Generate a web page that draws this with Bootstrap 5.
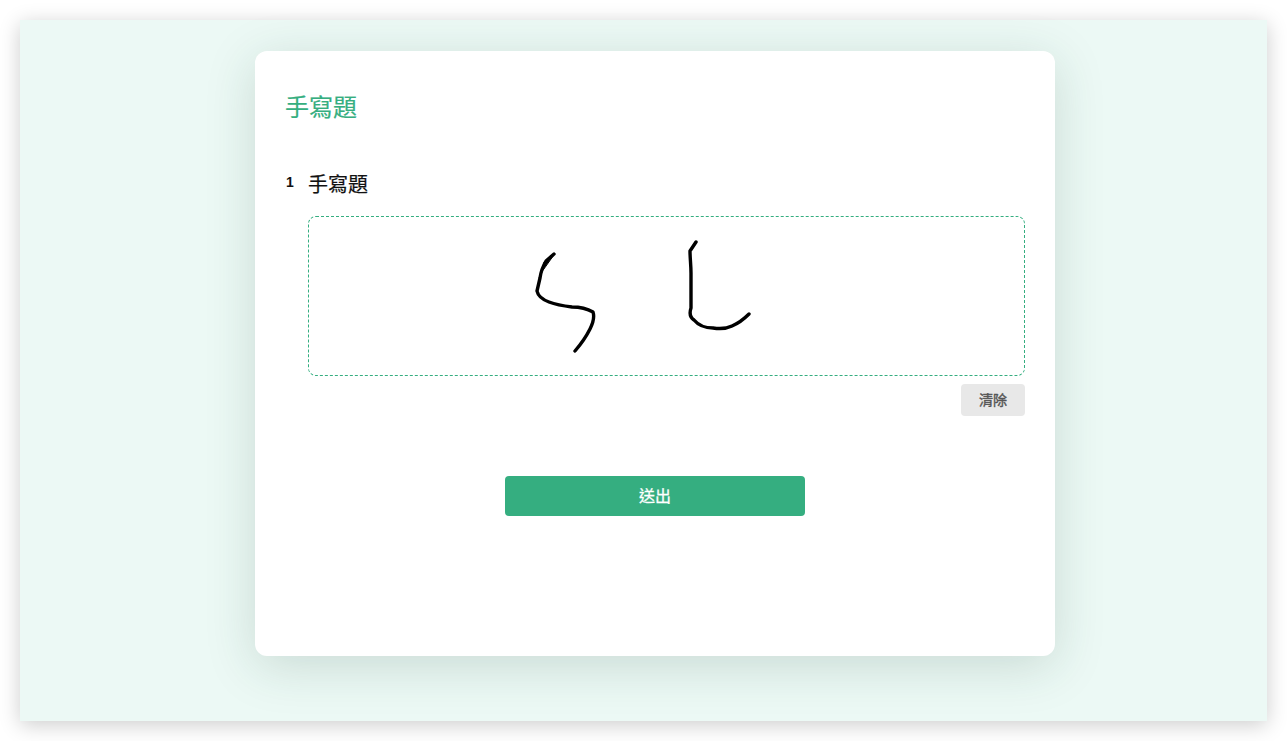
<!DOCTYPE html>
<html lang="zh-Hant">
<head>
<meta charset="utf-8">
<title>手寫題</title>
<link href="https://cdn.jsdelivr.net/npm/bootstrap@5.3.0/dist/css/bootstrap.min.css" rel="stylesheet">
<style>
html, body { height: 100%; }
body { background: #fff; padding: 20px; font-family: "Liberation Sans", "Noto Sans CJK TC", sans-serif; overflow: hidden; }
.app-window { height: 701px; background: #ecf9f5; box-shadow: 0 4px 20px rgba(0,0,0,.2); padding-top: 31px; }
.sheet { width: 800px; height: 605px; background: #fff; border-radius: 12px; padding: 30px 30px 0 30px; box-shadow: 0 10px 50px 0 rgba(30,70,55,.17); margin-left: 235px; }
.sheet-title { color: #35ae80; font-size: 24px; font-weight: 400; -webkit-text-stroke: .2px #35ae80; line-height: 54px; margin: 0 0 39px; height: 52px; }
.q-num { width: 23px; padding-left: 1px; font-size: 14px; font-weight: 700; line-height: 16px; margin-top: 2px; color: #111; }
.q-text { font-size: 20px; font-weight: 400; line-height: 26px; color: #111; -webkit-text-stroke: .2px #111; }
.draw-box { height: 160px; border: 1px dashed #35ae80; border-radius: 8px; margin-top: 18px; }
.draw-box svg { display: block; width: 100%; height: 100%; }
.clear-btn { width: 64px; height: 32px; background: #e8e8e8; color: #555; font-size: 14px; font-weight: 400; -webkit-text-stroke: .4px #555; border: 0; border-radius: 4px; padding: 0; margin-top: 8px; }
.send-btn { width: 300px; height: 40px; background: #35ae80; color: #fff; font-size: 16px; font-weight: 400; -webkit-text-stroke: .3px #fff; border: 0; border-radius: 4px; padding: 1px 0 0; margin-top: 60px; }
.send-row { margin-left: -30px; margin-right: -30px; }
</style>
</head>
<body>
<div class="app-window">
  <div class="sheet">
    <h1 class="sheet-title">手寫題</h1>
    <div class="d-flex">
      <div class="q-num">1</div>
      <div class="flex-grow-1">
        <div class="q-text">手寫題</div>
        <div class="draw-box">
          <svg viewBox="309 217 715 158" fill="none" stroke="#000" stroke-width="3.4" stroke-linecap="round" stroke-linejoin="round" aria-hidden="true">
            <path d="M554 254 L546 261 C543 266 541 271 540 278 L537 291 C538 296 541 299 549 302 C557 305 564 306 572 307 C578 307 586 308 593 312 C595 318 593 323 590 329 C586 337 581 344 575 351"/>
            <path d="M696 242 L690 251 C690 258 691 265 691 273 L691 308 C689 314 691 318 694 320 C699 326 705 328 713 328 C720 329 726 329 732 326 C739 323 744 319 749 314"/>
            <path d="M553 256 L544 262 L543 270 Z" fill="#000" stroke-width="1"/>
          </svg>
        </div>
        <div class="d-flex justify-content-end">
          <button type="button" class="btn clear-btn">清除</button>
        </div>
      </div>
    </div>
    <div class="send-row d-flex justify-content-center">
      <button type="button" class="btn send-btn">送出</button>
    </div>
  </div>
</div>
</body>
</html>
